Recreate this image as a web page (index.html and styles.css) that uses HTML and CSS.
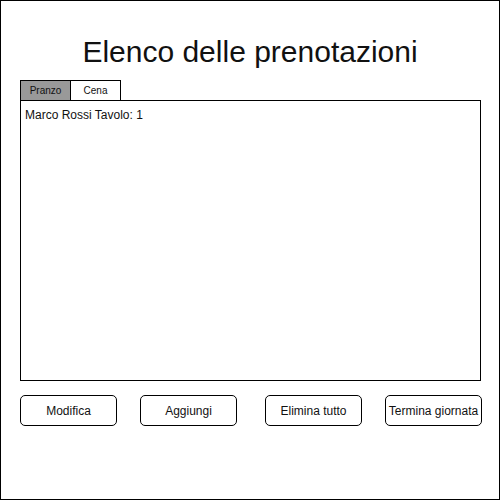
FILE: index.html
```html
<!DOCTYPE html>
<html lang="it">
<head>
<meta charset="utf-8">
<title>Elenco delle prenotazioni</title>
<link rel="stylesheet" href="styles.css">
</head>
<body>
<div class="frame">
  <h1 class="title">Elenco delle prenotazioni</h1>
  <div class="tabs">
    <div class="tab tab-active">Pranzo</div>
    <div class="tab">Cena</div>
  </div>
  <div class="list">
    <div class="list-item">Marco Rossi Tavolo: 1</div>
  </div>
  <div class="actions">
    <button class="btn">Modifica</button>
    <button class="btn">Aggiungi</button>
    <button class="btn btn-spaced">Elimina tutto</button>
    <button class="btn">Termina giornata</button>
  </div>
</div>
</body>
</html>
```
FILE: styles.css
```css
html, body {
  margin: 0;
  padding: 0;
  background: #ffffff;
}
body {
  font-family: "Liberation Sans", Arial, Helvetica, sans-serif;
  color: #000000;
}
.frame {
  box-sizing: border-box;
  width: 500px;
  height: 500px;
  border: 1px solid #000000;
  padding: 34px 19px 0 19px;
}
.title {
  margin: 0;
  font-weight: normal;
  font-size: 30px;
  line-height: 34px;
  text-align: center;
  color: #111111;
}
.tabs {
  display: flex;
  margin-top: 11px;
}
.tab {
  box-sizing: border-box;
  width: 51px;
  height: 21px;
  margin-right: -1px;
  margin-bottom: -1px;
  border: 1px solid #000000;
  font-size: 10px;
  line-height: 19px;
  text-align: center;
  color: #111111;
  background: #ffffff;
}
.tab-active {
  background: #999999;
}
.list {
  box-sizing: border-box;
  width: 461px;
  height: 281px;
  border: 1px solid #000000;
  padding: 7px 4px;
}
.list-item {
  font-size: 12px;
  line-height: 14px;
  color: #111111;
}
.actions {
  display: flex;
  gap: 23px;
  width: 462px;
  margin-top: 14px;
}
.btn {
  box-sizing: border-box;
  width: 97px;
  height: 31px;
  padding: 0;
  border: 1px solid #000000;
  border-radius: 5px;
  background: #ffffff;
  font-family: "Liberation Sans", Arial, Helvetica, sans-serif;
  font-size: 12px;
  color: #111111;
  white-space: nowrap;
}
.btn-spaced {
  margin-left: 5px;
}
```
